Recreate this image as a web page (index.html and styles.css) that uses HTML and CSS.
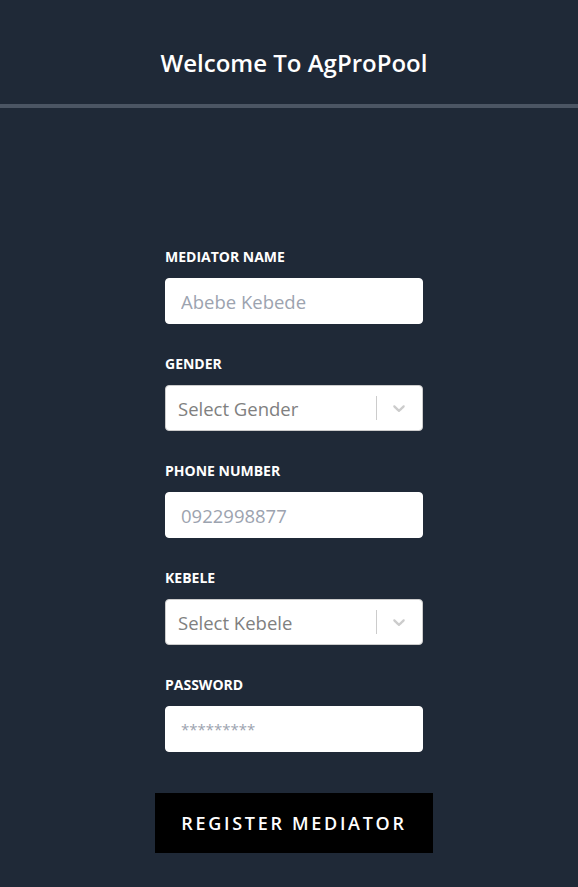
FILE: index.html
```html
<!DOCTYPE html>
<html lang="en">
<head>
<meta charset="utf-8">
<title>AgProPool</title>
<link rel="stylesheet" href="styles.css">
</head>
<body>
<div class="page">
  <header class="header">
    <h1 class="title">Welcome To AgProPool</h1>
  </header>
  <form class="form">
    <div class="field">
      <label class="label">MEDIATOR NAME</label>
      <input class="input" type="text" placeholder="Abebe Kebede">
    </div>
    <div class="field">
      <label class="label">GENDER</label>
      <div class="select">
        <span class="select-value">Select Gender</span>
        <span class="sep"></span>
        <span class="indicator">
          <svg width="20" height="20" viewBox="0 0 20 20"><path fill="#cccccc" d="M4.516 7.548c0.436-0.446 1.043-0.481 1.576 0l3.908 3.747 3.908-3.747c0.533-0.481 1.141-0.446 1.574 0 0.436 0.445 0.408 1.197 0 1.615-0.406 0.418-4.695 4.502-4.695 4.502-0.217 0.223-0.502 0.335-0.787 0.335s-0.57-0.112-0.789-0.335c0 0-4.287-4.084-4.695-4.502s-0.436-1.170 0-1.615z"/></svg>
        </span>
      </div>
    </div>
    <div class="field">
      <label class="label">PHONE NUMBER</label>
      <input class="input" type="text" placeholder="0922998877">
    </div>
    <div class="field">
      <label class="label">KEBELE</label>
      <div class="select">
        <span class="select-value">Select Kebele</span>
        <span class="sep"></span>
        <span class="indicator">
          <svg width="20" height="20" viewBox="0 0 20 20"><path fill="#cccccc" d="M4.516 7.548c0.436-0.446 1.043-0.481 1.576 0l3.908 3.747 3.908-3.747c0.533-0.481 1.141-0.446 1.574 0 0.436 0.445 0.408 1.197 0 1.615-0.406 0.418-4.695 4.502-4.695 4.502-0.217 0.223-0.502 0.335-0.787 0.335s-0.57-0.112-0.789-0.335c0 0-4.287-4.084-4.695-4.502s-0.436-1.170 0-1.615z"/></svg>
        </span>
      </div>
    </div>
    <div class="field last">
      <label class="label">PASSWORD</label>
      <input class="input input-password" type="password" placeholder="*********">
    </div>
    <button class="button" type="button">REGISTER MEDIATOR</button>
  </form>
</div>
</body>
</html>
```
FILE: styles.css
```css
* { box-sizing: border-box; }
html, body {
  margin: 0;
  padding: 0;
  background: #1f2937;
  font-family: "Open Sans", "Noto Sans", sans-serif;
}
.page {
  min-height: 887px;
  background: #1f2937;
}
.header {
  padding: 47px 0 25px 10px;
  border-bottom: 4px solid #4b5563;
  text-align: center;
}
.title {
  margin: 0;
  font-size: 24px;
  line-height: 32px;
  font-weight: 600;
  color: #ffffff;
}
.form {
  display: flex;
  flex-direction: column;
  align-items: center;
  padding: 139px 0 0 10px;
}
.field {
  width: 258px;
  display: flex;
  flex-direction: column;
  margin-bottom: 30px;
}
.field.last { margin-bottom: 41px; }
.label {
  font-size: 14px;
  line-height: 20px;
  font-weight: 700;
  color: #ffffff;
  margin-bottom: 11px;
}
.input {
  height: 46px;
  width: 100%;
  border: 1px solid #ffffff;
  border-radius: 4px;
  background: #ffffff;
  padding: 0 15px;
  font-family: inherit;
  font-size: 18.5px;
  color: #111827;
  outline: none;
}
.input-password { font-size: 15px; }
.input::placeholder { color: #9ca3af; }
.select {
  height: 46px;
  display: flex;
  align-items: center;
  background: #ffffff;
  border: 1px solid #cccccc;
  border-radius: 4px;
}
.select-value {
  flex: 1;
  padding-left: 12px;
  font-size: 18.5px;
  color: #808080;
}
.sep {
  width: 1px;
  align-self: stretch;
  margin: 10px 0;
  background: #cccccc;
}
.indicator {
  display: flex;
  padding: 0 13px 0 12px;
}
.button {
  width: 278px;
  height: 60px;
  border: none;
  background: #000000;
  color: #ffffff;
  font-family: inherit;
  font-size: 18px;
  font-weight: 600;
  letter-spacing: 2.7px;
  padding: 0;
  cursor: pointer;
}
```
